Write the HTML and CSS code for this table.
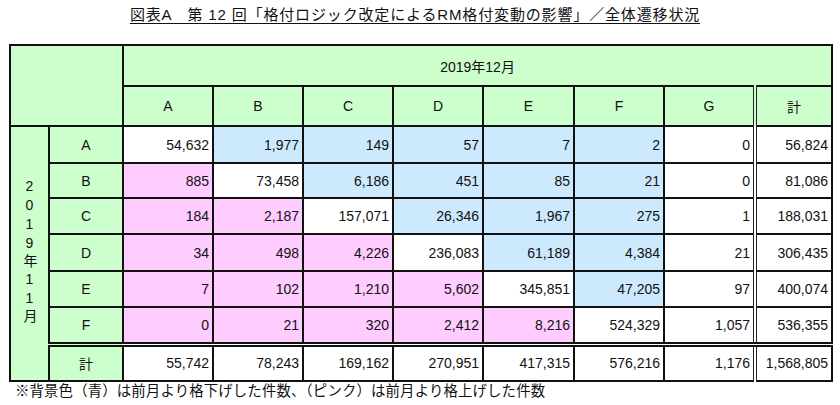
FILE: index.html
```html
<!DOCTYPE html>
<html lang="ja">
<head>
<meta charset="utf-8">
<title>全体遷移状況</title>
<link rel="stylesheet" href="styles.css">
</head>
<body>
<div class="page">
  <h1 class="title">図表A　第 12 回「格付ロジック改定によるRM格付変動の影響」／全体遷移状況</h1>
  <table class="matrix">
    <colgroup>
      <col class="c-v"><col class="c-lab">
      <col class="c-n"><col class="c-n"><col class="c-n"><col class="c-n">
      <col class="c-n1"><col class="c-n"><col class="c-n1"><col class="c-t">
    </colgroup>
    <thead>
      <tr class="r-top">
        <th class="hd corner" colspan="2" rowspan="2"></th>
        <th class="hd" colspan="8">2019年12月</th>
      </tr>
      <tr class="r-head">
        <th class="hd">A</th><th class="hd">B</th><th class="hd">C</th><th class="hd">D</th>
        <th class="hd">E</th><th class="hd">F</th><th class="hd">G</th><th class="hd dbl-l">計</th>
      </tr>
    </thead>
    <tbody>
      <tr class="r1">
        <th class="hd vlabel" rowspan="7"><span class="vtext">2019年11月</span></th>
        <th class="hd">A</th>
        <td>54,632</td><td class="down">1,977</td><td class="down">149</td><td class="down">57</td><td class="down">7</td><td class="down">2</td><td>0</td><td class="dbl-l">56,824</td>
      </tr>
      <tr class="r2">
        <th class="hd">B</th>
        <td class="up">885</td><td>73,458</td><td class="down">6,186</td><td class="down">451</td><td class="down">85</td><td class="down">21</td><td>0</td><td class="dbl-l">81,086</td>
      </tr>
      <tr class="r3">
        <th class="hd">C</th>
        <td class="up">184</td><td class="up">2,187</td><td>157,071</td><td class="down">26,346</td><td class="down">1,967</td><td class="down">275</td><td>1</td><td class="dbl-l">188,031</td>
      </tr>
      <tr class="r4">
        <th class="hd">D</th>
        <td class="up">34</td><td class="up">498</td><td class="up">4,226</td><td>236,083</td><td class="down">61,189</td><td class="down">4,384</td><td>21</td><td class="dbl-l">306,435</td>
      </tr>
      <tr class="r5">
        <th class="hd">E</th>
        <td class="up">7</td><td class="up">102</td><td class="up">1,210</td><td class="up">5,602</td><td>345,851</td><td class="down">47,205</td><td>97</td><td class="dbl-l">400,074</td>
      </tr>
      <tr class="r6">
        <th class="hd">F</th>
        <td class="up">0</td><td class="up">21</td><td class="up">320</td><td class="up">2,412</td><td class="up">8,216</td><td>524,329</td><td>1,057</td><td class="dbl-l">536,355</td>
      </tr>
      <tr class="r7 total">
        <th class="hd dbl-t">計</th>
        <td class="dbl-t">55,742</td><td class="dbl-t">78,243</td><td class="dbl-t">169,162</td><td class="dbl-t">270,951</td><td class="dbl-t">417,315</td><td class="dbl-t">576,216</td><td class="dbl-t">1,176</td><td class="dbl-t dbl-l">1,568,805</td>
      </tr>
    </tbody>
  </table>
  <p class="note">※背景色（青）は前月より格下げした件数、（ピンク）は前月より格上げした件数</p>
</div>
</body>
</html>
```
FILE: styles.css
```css
html, body {
  margin: 0;
  padding: 0;
  background: #ffffff;
}

body {
  font-family: "Liberation Sans", "Noto Sans CJK JP", sans-serif;
  color: #111;
}

.page {
  width: 840px;
  height: 405px;
  padding: 4px 0 0 9px;
  box-sizing: border-box;
}

.title {
  margin: 0;
  width: 812px;
  text-align: center;
  font-size: 15px;
  font-weight: normal;
  line-height: 22px;
  height: 40px;
  text-decoration: underline;
  text-underline-offset: 3px;
  text-decoration-thickness: 1px;
  letter-spacing: 0.85px;
}

.matrix {
  border-collapse: collapse;
  table-layout: fixed;
  width: 822px;
  border: 2px solid #000;
  font-size: 14px;
}

.c-v { width: 39px; }
.c-lab { width: 74px; }
.c-n { width: 90px; }
.c-n1 { width: 91px; }
.c-t { width: 77px; }

.matrix th,
.matrix td {
  border: 2px solid #111;
  padding: 0 3px 0 0;
  font-weight: normal;
  white-space: nowrap;
}

.matrix td {
  text-align: right;
  background: #fff;
  vertical-align: middle;
}

.matrix th.hd {
  background: #ccffcc;
  text-align: center;
  padding: 0;
}

.r-top { height: 41px; }
.r-head { height: 40px; }
.r1 { height: 37px; }
.r2 { height: 35px; }
.r3 { height: 36px; }
.r4 { height: 37px; }
.r5 { height: 36px; }
.r6 { height: 37px; }
.r7 { height: 37px; }

.matrix td.down { background: #cde9fd; }
.matrix td.up { background: #ffccff; }

.matrix .dbl-l { border-left: 4px double #222; }
.matrix .dbl-t { border-top: 5px double #111; }

.vlabel {
  vertical-align: middle;
}

.vtext {
  display: inline-block;
  writing-mode: vertical-rl;
  text-orientation: upright;
  letter-spacing: 3px;
  font-size: 14px;
  line-height: 16px;
}

.note {
  margin: 1px 0 0 6px;
  font-size: 14.4px;
  line-height: 16px;
  letter-spacing: 0.15px;
}
```
